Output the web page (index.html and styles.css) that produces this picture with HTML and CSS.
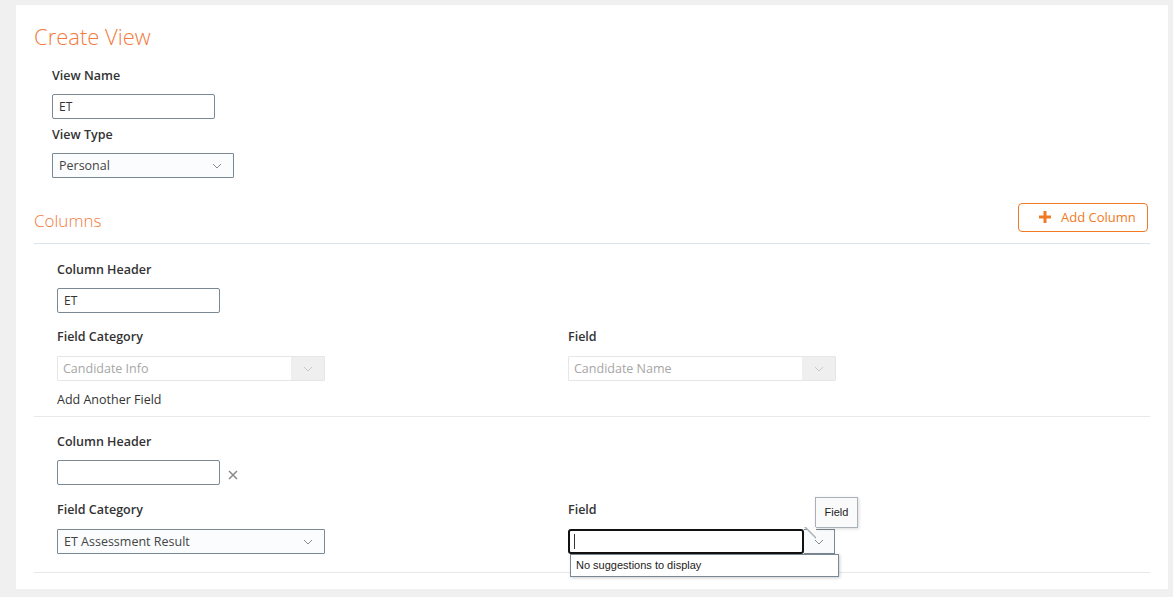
FILE: index.html
```html
<!DOCTYPE html>
<html lang="en">
<head>
  <meta charset="UTF-8">
  <title>Create View</title>
  <link rel="stylesheet" href="styles.css">
</head>
<body>
  <div class="panel">
    <h1 class="page-title">Create View</h1>

    <div class="view-form">
      <label class="field-label">View Name</label>
      <input class="text-input" type="text" value="ET">
      <label class="field-label label-tight">View Type</label>
      <div class="select select-type">
        <span class="select-value">Personal</span>
        <span class="select-btn"><svg width="10" height="6" viewBox="0 0 10 6"><path d="M1 1l4 4 4-4" fill="none" stroke="#8a8a8a" stroke-width="1"/></svg></span>
      </div>
    </div>

    <div class="columns-head">
      <h2 class="section-title">Columns</h2>
      <button class="add-btn">
        <svg width="14" height="14" viewBox="0 0 14 14"><path d="M7 1v12M1 7h12" stroke="#f07a24" stroke-width="3"/></svg>
        <span>Add Column</span>
      </button>
    </div>

    <div class="column-block">
      <label class="field-label">Column Header</label>
      <input class="text-input" type="text" value="ET">
      <div class="field-grid">
        <div>
          <label class="field-label">Field Category</label>
          <div class="select select-wide disabled">
            <span class="select-value">Candidate Info</span>
            <span class="select-btn"><svg width="10" height="6" viewBox="0 0 10 6"><path d="M1 1l4 4 4-4" fill="none" stroke="#c8c8c8" stroke-width="1"/></svg></span>
          </div>
        </div>
        <div>
          <label class="field-label">Field</label>
          <div class="select select-wide disabled">
            <span class="select-value">Candidate Name</span>
            <span class="select-btn"><svg width="10" height="6" viewBox="0 0 10 6"><path d="M1 1l4 4 4-4" fill="none" stroke="#c8c8c8" stroke-width="1"/></svg></span>
          </div>
        </div>
      </div>
      <div class="add-field">Add Another Field</div>
    </div>

    <div class="column-block last">
      <label class="field-label">Column Header</label>
      <div class="header-row">
        <input class="text-input" type="text" value="">
        <svg class="remove-icon" width="10" height="10" viewBox="0 0 10 10"><path d="M1 1l8 8M9 1l-8 8" stroke="#8a8a8a" stroke-width="1.5"/></svg>
      </div>
      <div class="field-grid">
        <div>
          <label class="field-label">Field Category</label>
          <div class="select select-wide">
            <span class="select-value">ET Assessment Result</span>
            <span class="select-btn"><svg width="10" height="6" viewBox="0 0 10 6"><path d="M1 1l4 4 4-4" fill="none" stroke="#8a8a8a" stroke-width="1"/></svg></span>
          </div>
        </div>
        <div>
          <label class="field-label">Field</label>
          <div class="combo">
            <div class="combo-input"><span class="caret"></span></div>
            <span class="combo-btn"><svg width="10" height="6" viewBox="0 0 10 6"><path d="M1 1l4 4 4-4" fill="none" stroke="#8a8a8a" stroke-width="1"/></svg></span>
            <div class="suggestions">No suggestions to display</div>
            <div class="tooltip">Field</div>
          </div>
        </div>
      </div>
    </div>
  </div>
</body>
</html>
```

FILE: styles.css
```css
* { box-sizing: border-box; }
body { margin: 0; padding: 5px 5px 8px 16px; background: #f0f0f0; font-family: 'Segoe UI', 'Open Sans', sans-serif; color: #333; font-size: 13px; }
.panel { width: 1152px; height: 584px; background: #fff; padding: 16px 18px 0 18px; }
.page-title { margin: 0; font-size: 22px; line-height: 31px; font-weight: 300; color: #f37a3c; }
.view-form { display: flex; flex-direction: column; align-items: flex-start; padding-left: 18px; margin-top: 14px; }
.field-label { display: block; font-weight: 600; font-size: 12.5px; line-height: 20px; color: #333; margin-bottom: 8px; }
.field-grid .field-label { margin-bottom: 9px; }
.label-tight { margin-top: 6px; }
.text-input { width: 163px; height: 25px; border: 1px solid #7a8894; border-radius: 2px; padding: 0 6px; font: inherit; font-size: 12px; color: #333; outline: none; background: #fff; }
.select { display: flex; align-items: stretch; height: 25px; border: 1px solid #7a8894; background: #fafcfe; border-radius: 1px; }
.select-type { width: 182px; }
.select-wide { width: 268px; }
.select-value { flex: 1; padding-left: 6px; line-height: 23px; font-size: 12.5px; color: #444; white-space: nowrap; }
.select-btn { width: 33px; display: flex; align-items: center; justify-content: center; }
.select.disabled { border-color: #e6e6e6; background: #fff; }
.select.disabled .select-value { color: #a6a6a6; padding-left: 5px; }
.select.disabled .select-btn { background: #efefef; }
.columns-head { display: flex; justify-content: space-between; align-items: center; margin-top: 24px; padding-bottom: 11px; border-bottom: 1px solid #dde3ea; }
.section-title { margin: 8px 0 0; font-size: 17px; font-weight: 300; color: #f37a3c; line-height: 22px; }
.add-btn { display: flex; align-items: center; gap: 9px; height: 29px; width: 130px; margin-right: 2px; border: 1px solid #f07a24; border-radius: 4px; background: #fff; color: #f07a24; font: inherit; font-size: 13px; padding: 0 0 0 19px; }
.column-block { padding: 16px 0 6px 23px; border-bottom: 1px solid #e8e8e8; }
.column-block.last { padding-top: 15px; padding-bottom: 18px; }
.column-block > .text-input { margin-bottom: 14px; }
.header-row { display: flex; align-items: center; gap: 8px; margin-bottom: 15px; }
.remove-icon { margin-top: 5px; }
.field-grid { display: grid; grid-template-columns: 511px 1fr; }
.add-field { margin-top: 9px; line-height: 20px; font-size: 12.5px; }
.combo { position: relative; display: flex; width: 267px; height: 25px; }
.combo-input { flex: 1; border: 2px solid #111; border-radius: 3px; height: 25px; display: flex; align-items: center; padding-left: 4px; }
.caret { width: 1px; height: 15px; background: #333; }
.combo-btn { width: 31px; height: 25px; display: flex; align-items: center; justify-content: center; background: #f8fafc; border: 1px solid #7a8894; border-left: none; }
.suggestions { position: absolute; left: 2px; top: 25px; width: 269px; height: 23px; border: 1px solid #7a8894; background: #fff; font-family: 'Liberation Sans', Arial, sans-serif; font-size: 11px; line-height: 21px; padding-left: 5px; color: #222; box-shadow: 1px 1px 3px rgba(0,0,0,0.2); }
.tooltip { position: absolute; left: 247px; top: -32px; width: 43px; height: 31px; border: 1px solid #a8b0b8; background: #fafafa; font-family: 'Liberation Sans', Arial, sans-serif; font-size: 11px; line-height: 29px; text-align: center; color: #222; box-shadow: 1px 1px 3px rgba(0,0,0,0.15); }
.tooltip::before { content: ''; position: absolute; left: -1px; bottom: -12px; border-left: 12px solid transparent; border-top: 12px solid #a8b0b8; transform: translateX(-11px); }
.tooltip::after { content: ''; position: absolute; left: 0; bottom: -10px; border-left: 10px solid transparent; border-top: 10px solid #fafafa; transform: translateX(-10px); }
```
